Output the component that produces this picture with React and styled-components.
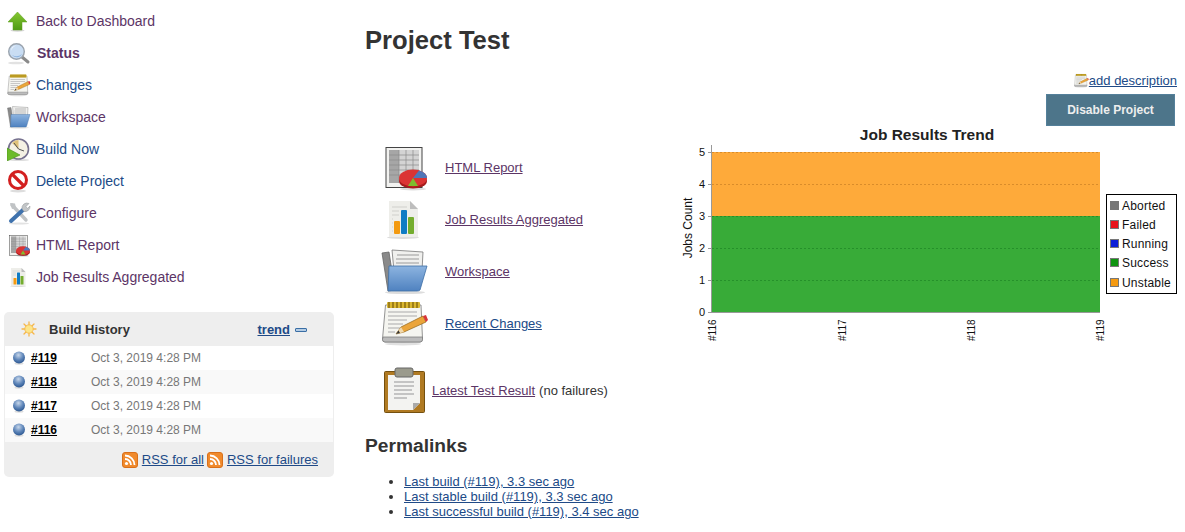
import React from "react";
import styled, { createGlobalStyle } from "styled-components";

const GlobalStyle = createGlobalStyle`
  html, body {
    margin: 0;
    padding: 0;
    background: #fff;
  }
  body {
    font-family: "Liberation Sans", Arial, sans-serif;
    font-size: 13px;
    color: #333;
  }
`;

const BLUE = "#204a87";
const PURPLE = "#5c3566";

const Page = styled.div`
  width: 1185px;
  height: 532px;
  overflow: hidden;
  display: flex;
`;

const Sidebar = styled.aside`
  width: 365px;
  flex: none;
  padding: 5px 0 0 4px;
  box-sizing: border-box;
`;

const Tasks = styled.nav`
  display: flex;
  flex-direction: column;
  margin-bottom: 19px;
`;

const Task = styled.a`
  height: 32px;
  display: flex;
  align-items: center;
  gap: ${(p) => (p.$active ? 6 : 5)}px;
  padding-left: 3px;
  color: ${(p) => (p.$visited ? PURPLE : BLUE)};
  font-size: 14px;
  font-weight: ${(p) => (p.$active ? "bold" : "normal")};
  text-decoration: none;
`;

const Panel = styled.section`
  width: 330px;
  background: #eee;
  border-radius: 5px;
  overflow: hidden;
`;

const PanelHead = styled.header`
  height: 34px;
  display: flex;
  align-items: center;
  padding: 0 27px 0 17px;
  font-size: 13px;
  font-weight: bold;
`;

const PanelTitle = styled.span`
  margin-left: 12px;
  flex: 1;
`;

const TrendLink = styled.a`
  color: ${BLUE};
  font-size: 13px;
  text-decoration: underline;
`;

const Minus = styled.span`
  width: 12px;
  height: 4px;
  margin-left: 5px;
  margin-top: 2px;
  border: 1px solid #3a6ea5;
  border-radius: 1px;
  background: #b4cce4;
  box-sizing: border-box;
`;

const BuildRow = styled.div`
  height: 24px;
  display: flex;
  align-items: center;
  margin: 0 1px;
  padding-left: 8px;
  background: ${(p) => (p.$odd ? "#f9f9f9" : "#fff")};
`;

const BuildLink = styled.a`
  width: 60px;
  margin-left: 6px;
  color: #000;
  font-size: 12px;
  font-weight: bold;
  text-decoration: underline;
`;

const BuildDate = styled.span`
  color: #777;
  font-size: 12px;
`;

const PanelFoot = styled.footer`
  height: 35px;
  display: flex;
  align-items: center;
  justify-content: flex-end;
  padding-right: 16px;
`;

const RssLink = styled.a`
  margin: 0 ${(p) => p.$gap ?? 0}px 0 4px;
  color: ${BLUE};
  text-decoration: underline;
`;

const Main = styled.main`
  flex: 1;
  min-width: 0;
  display: flex;
  flex-direction: column;
  padding-right: 8px;
`;

const Title = styled.h1`
  margin: 25px 0 0;
  font-size: 25.6px;
  line-height: 30px;
  font-weight: bold;
  color: #333;
`;

const Actions = styled.div`
  display: flex;
  flex-direction: column;
  align-items: flex-end;
  margin-top: 17px;
`;

const DescriptionLink = styled.a`
  display: flex;
  align-items: center;
  height: 16px;
  color: ${BLUE};
  text-decoration: underline;
`;

const DisableButton = styled.button`
  width: 129px;
  height: 32px;
  margin: 6px 2px 0 0;
  padding: 0;
  border: 1px solid #54809a;
  background: #4d758a;
  color: #eee;
  font-family: inherit;
  font-size: 12px;
  font-weight: bold;
`;

const Body = styled.div`
  display: flex;
`;

const Left = styled.div`
  width: 317px;
  flex: none;
  display: flex;
  flex-direction: column;
  padding-top: 15px;
`;

const BigRow = styled.div`
  height: 52px;
  display: flex;
  align-items: center;
  padding-left: 16px;
`;

const BigLink = styled.a`
  margin-left: 16px;
  color: ${(p) => (p.$visited ? PURPLE : BLUE)};
  text-decoration: underline;
`;

const ResultRow = styled.div`
  height: 52px;
  margin-top: 15px;
  display: flex;
  align-items: center;
  padding-left: 18px;
`;

const ResultLink = styled.a`
  margin-left: 1px;
  color: ${PURPLE};
  text-decoration: underline;
`;

const ResultNote = styled.span`
  margin-left: 4px;
`;

const ChartBox = styled.div`
  width: 495px;
  height: 220px;
  flex: none;
`;

const SubTitle = styled.h2`
  margin: 18px 0 0;
  font-size: 19.2px;
  line-height: 24px;
  font-weight: bold;
`;

const Permalinks = styled.ul`
  margin: 16px 0 0;
  padding-left: 39px;
  line-height: 15px;
`;

const Permalink = styled.a`
  color: ${BLUE};
  text-decoration: underline;
`;

const ArrowIcon = () => (
  <svg width="24" height="24" viewBox="0 0 24 24">
    <defs>
      <linearGradient id="arrowGreen" x1="0" y1="0" x2="0" y2="1">
        <stop offset="0" stopColor="#86c832" />
        <stop offset="1" stopColor="#4f9a14" />
      </linearGradient>
    </defs>
    <ellipse cx="10.5" cy="21.5" rx="7" ry="1.2" fill="#d5d5d5" />
    <path d="M10.5 3 L20 13 H15 V21 H6 V13 H1 Z" fill="url(#arrowGreen)" stroke="#5c9c1c" strokeWidth=".5" />
  </svg>
);

const SearchIcon = () => (
  <svg width="24" height="24" viewBox="0 0 24 24">
    <ellipse cx="9" cy="22" rx="8" ry="1.3" fill="#e2e2e2" />
    <path d="M15 16 L21 21" stroke="#8a8a8a" strokeWidth="3" strokeLinecap="round" />
    <circle cx="9.5" cy="10.5" r="7.8" fill="#c9ddf3" stroke="#9aa3ad" strokeWidth="1.4" />
    <path d="M4 10 A5.5 5.5 0 0 1 9.5 4.5 A8 8 0 0 0 4 10Z" fill="#fff" />
    <path d="M5 14 A6 6 0 0 0 15 13 A9 9 0 0 1 5 14Z" fill="#8fb5e0" />
  </svg>
);

const NotepadIcon = ({ size = 24 }) => (
  <svg width={size} height={size} viewBox="0 0 48 48">
    <ellipse cx="22" cy="45" rx="18" ry="1.4" fill="#e0e0e0" />
    <path d="M4.5 6 H40 L41.5 40 Q41.5 43 39 43 H4 Q1.5 43 1.5 40 Z" fill="#f5f5f0" stroke="#888" strokeWidth=".9" />
    <path d="M2 38 H41.5 V40.5 Q41.5 43 39 43 H4 Q1.5 43 1.5 40.5Z" fill="#bcbcbc" stroke="#777" strokeWidth=".7" />
    <rect x="6" y="3" width="33" height="6" rx="1" fill="#d9b62e" />
    <path d="M8 3v6M12 3v6M16 3v6M20 3v6M24 3v6M28 3v6M32 3v6M36 3v6" stroke="#8a6d12" strokeWidth="1.5" />
    <path d="M7 13H36M7 17H36M7 21H26M7 25H22M7 29H20M7 33H14" stroke="#aaa" strokeWidth="1.2" />
    <path d="M15 35 L20 28 L42 17 L45 23 L23 33 Z" fill="#eba53a" stroke="#8f6418" strokeWidth=".7" />
    <path d="M15 35 L20 28 L23 33Z" fill="#f0d9ae" />
    <path d="M15 35 L17.5 31.5 L19 34Z" fill="#333" />
    <path d="M42 17 L45 23 L47 21 L45 16Z" fill="#d8353a" />
  </svg>
);

const FolderIcon = ({ size = 24 }) => (
  <svg width={size} height={size} viewBox="0 0 48 48">
    <defs>
      <linearGradient id="folderBlue" x1="0" y1="0" x2="0" y2="1">
        <stop offset="0" stopColor="#8db4e0" />
        <stop offset="1" stopColor="#4f82c0" />
      </linearGradient>
    </defs>
    <ellipse cx="24" cy="45.5" rx="20" ry="1.6" fill="#ddd" />
    <path d="M1 6 L8 5 L14 43 L7 44 Z" fill="#8a8a8a" stroke="#666" strokeWidth=".8" />
    <path d="M11 3 L42 5 L41 24 L13 24 Z" fill="#f0f0ee" stroke="#777" strokeWidth=".8" />
    <path d="M16 8H38M15 12H38M15 16H38M14 20H38" stroke="#999" strokeWidth="1.2" />
    <path d="M8 19 L46 19 L39 43 Q38 44 36 44 H7 Z" fill="url(#folderBlue)" stroke="#3e6ea6" strokeWidth=".8" />
  </svg>
);

const ClockIcon = () => (
  <svg width="24" height="24" viewBox="0 0 24 24">
    <ellipse cx="12" cy="23" rx="10" ry="1" fill="#ddd" />
    <circle cx="11.5" cy="12" r="10" fill="#f4f1e4" stroke="#77728f" strokeWidth="1.6" />
    <path d="M11.5 12 L11.5 3 A9 9 0 0 0 5 6Z" fill="#e0c27a" />
    <path d="M11.5 12 L7 6M11.5 12 L17 14" stroke="#555" strokeWidth="1" />
    <path d="M0 11 L13 18 L0 24Z" fill="#6cbb2a" stroke="#4a8f1d" strokeWidth=".6" />
  </svg>
);

const NoIcon = () => (
  <svg width="24" height="24" viewBox="0 0 24 24">
    <ellipse cx="11" cy="22" rx="8" ry="1.4" fill="#ddd" />
    <circle cx="11" cy="11" r="8.5" fill="#fff" stroke="#d32020" strokeWidth="3" />
    <path d="M5 5 L17 17" stroke="#d32020" strokeWidth="3.2" />
  </svg>
);

const ToolsIcon = () => (
  <svg width="24" height="24" viewBox="0 0 24 24">
    <ellipse cx="12" cy="22.5" rx="10" ry="1" fill="#e2e2e2" />
    <path d="M5 4 L19 19" stroke="#c0c3c5" strokeWidth="3.4" strokeLinecap="round" />
    <path d="M3 2 L8 2.5 L9 7 L5 8 Z" fill="#c0c3c5" />
    <path d="M17 8 L4 20" stroke="#3f72ad" strokeWidth="4" strokeLinecap="round" />
    <path d="M15 8 A5 5 0 0 1 22 2.5 L19 5.5 L20.5 7.5 L23 5 A5 5 0 0 1 17 10.5Z" fill="#c3c6c8" stroke="#8f9294" strokeWidth=".5" />
  </svg>
);

const SheetIcon = ({ size = 24 }) => (
  <svg width={size} height={size} viewBox="0 0 48 48">
    <ellipse cx="32" cy="46" rx="13" ry="1.5" fill="#ddd" />
    <rect x="5" y="4.5" width="36" height="40" fill="#f2f2f0" stroke="#444" strokeWidth="1" />
    <rect x="8" y="7" width="30" height="33" fill="#d4d4d4" />
    <rect x="8" y="7" width="10" height="33" fill="#a6a6a6" />
    <path d="M8 12H38M8 17H38M8 22H38M8 27H38M8 32H38M18 7V40M25 7V40M32 7V40" stroke="#8a8a8a" strokeWidth=".7" />
    <ellipse cx="32" cy="38" rx="14" ry="7.5" fill="#a81c1c" />
    <ellipse cx="32" cy="35" rx="14" ry="8.5" fill="#db3434" />
    <path d="M32 35 L46 35 A14 8.5 0 0 0 38 27.5 Z" fill="#4f76b8" />
    <path d="M32 35 L27 43 L37 43 Z" fill="#7fbd2d" />
  </svg>
);

const ReportIcon = ({ size = 24 }) => (
  <svg width={size} height={size} viewBox="0 0 48 48">
    <ellipse cx="22" cy="42.5" rx="16" ry="1.5" fill="#ddd" />
    <path d="M8 6 H29 L37 14 V42 H8 Z" fill="#eeeeea" />
    <path d="M29 6 L37 14 H29 Z" fill="#bdbdbd" />
    <path d="M11 12H26M11 16H18M11 20H18M11 24H12M11 28H12M11 32H12M11 36H12" stroke="#cfcfcb" strokeWidth="1.2" />
    <rect x="13" y="26" width="6" height="13" rx="1" fill="#f39a10" />
    <rect x="20" y="15" width="6" height="24" rx="1" fill="#0f7cc4" />
    <rect x="27" y="22" width="6" height="17" rx="1" fill="#74ad2e" />
  </svg>
);

const ClipboardIcon = () => (
  <svg width="48" height="48" viewBox="0 0 48 48">
    <rect x="1.5" y="5.5" width="40" height="41" rx="1" fill="#b07a22" stroke="#74500f" strokeWidth="1" />
    <path d="M5 9 H37 V37 L30 44 H5 Z" fill="#f3f3f1" />
    <path d="M30 44 L37 37 H30 Z" fill="#aaa" />
    <rect x="12" y="2" width="18" height="9" rx="2" fill="#9a9a8c" stroke="#666" strokeWidth="1" />
    <path d="M11 16H31M11 20H31M11 24H29M11 28H31M11 32H24" stroke="#b5b5b5" strokeWidth="1.4" />
  </svg>
);

const SunIcon = () => (
  <svg width="16" height="16" viewBox="0 0 16 16">
    <g stroke="#f6b64a" strokeWidth="1.3" strokeLinecap="round">
      <path d="M8 1v2.5M8 12.5V15M1 8h2.5M12.5 8H15M3 3l1.8 1.8M11.2 11.2 13 13M13 3l-1.8 1.8M4.8 11.2 3 13" />
    </g>
    <circle cx="8" cy="8" r="4.2" fill="#fde58a" stroke="#f2b23c" strokeWidth=".8" />
  </svg>
);

const BallIcon = () => (
  <svg width="12" height="14" viewBox="0 0 12 14">
    <defs>
      <radialGradient id="ball" cx=".45" cy=".3" r=".75">
        <stop offset="0" stopColor="#c6d6ea" />
        <stop offset=".55" stopColor="#5c84b8" />
        <stop offset="1" stopColor="#25508a" />
      </radialGradient>
    </defs>
    <ellipse cx="6" cy="12.5" rx="4.5" ry="1.2" fill="#ddd" />
    <circle cx="6" cy="6.5" r="6" fill="url(#ball)" />
  </svg>
);

const RssIcon = () => (
  <svg width="16" height="16" viewBox="0 0 16 16">
    <rect x=".5" y=".5" width="15" height="15" rx="2.5" fill="#f08a2c" stroke="#d9701a" />
    <circle cx="4.5" cy="11.5" r="1.6" fill="#fff" />
    <path d="M3 7a6 6 0 0 1 6 6M3 3.5A9.5 9.5 0 0 1 12.5 13" fill="none" stroke="#fff" strokeWidth="1.8" />
  </svg>
);

const TaskIcons = {
  arrow: ArrowIcon,
  search: SearchIcon,
  notepad: NotepadIcon,
  folder: FolderIcon,
  clock: ClockIcon,
  no: NoIcon,
  tools: ToolsIcon,
  sheet: SheetIcon,
  report: ReportIcon,
};

const tasks = [
  { label: "Back to Dashboard", icon: "arrow", visited: true },
  { label: "Status", icon: "search", visited: true, active: true },
  { label: "Changes", icon: "notepad" },
  { label: "Workspace", icon: "folder", visited: true },
  { label: "Build Now", icon: "clock" },
  { label: "Delete Project", icon: "no" },
  { label: "Configure", icon: "tools", visited: true },
  { label: "HTML Report", icon: "sheet", visited: true },
  { label: "Job Results Aggregated", icon: "report", visited: true },
];

const builds = ["#119", "#118", "#117", "#116"];

const permalinks = [
  "Last build (#119), 3.3 sec ago",
  "Last stable build (#119), 3.3 sec ago",
  "Last successful build (#119), 3.4 sec ago",
];

const legend = [
  { label: "Aborted", color: "#777", y: 80 },
  { label: "Failed", color: "#e8141c", y: 99 },
  { label: "Running", color: "#0b1fd8", y: 118 },
  { label: "Success", color: "#0f9410", y: 137 },
  { label: "Unstable", color: "#f59a10", y: 157 },
];

const TrendChart = () => (
  <svg width="495" height="220" viewBox="0 0 495 220" fontFamily="'Liberation Sans', Arial, sans-serif">
    <text x="245" y="14" textAnchor="middle" fontSize="15.5" fontWeight="bold" fill="#222">
      Job Results Trend
    </text>
    <rect x="30" y="26" width="388" height="64" fill="#feaa3a" />
    <rect x="30" y="90" width="388" height="96" fill="#38ab38" />
    <g strokeDasharray="2 2" strokeWidth="1">
      <path d="M30 26.5H418M30 58.5H418" stroke="#d98c2a" />
      <path d="M30 90.5H418M30 122.5H418M30 154.5H418" stroke="#25902a" />
    </g>
    <path d="M29.5 19V186" stroke="#999" />
    <path d="M26 186.5H418" stroke="#999" strokeWidth="1" />
    <path d="M26 26.5h4M26 58.5h4M26 90.5h4M26 122.5h4M26 154.5h4" stroke="#999" />
    {[5, 4, 3, 2, 1, 0].map((v, i) => (
      <text key={v} x="23" y={30 + i * 32} textAnchor="end" fontSize="11" fill="#111">
        {v}
      </text>
    ))}
    <text transform="translate(10 102) rotate(-90)" textAnchor="middle" fontSize="12" fill="#111">
      Jobs Count
    </text>
    {[
      ["#116", 34],
      ["#117", 164],
      ["#118", 293],
      ["#119", 422],
    ].map(([label, x]) => (
      <text key={label} transform={`translate(${x} 215) rotate(-90)`} fontSize="10" fill="#111">
        {label}
      </text>
    ))}
    <rect x="424.5" y="68.5" width="70" height="99" fill="#fff" stroke="#000" />
    {legend.map((item) => (
      <g key={item.label}>
        <rect x="428.5" y={item.y - 4.5} width="8" height="8" fill={item.color} stroke="#777" />
        <text x="440" y={item.y + 4} fontSize="12" letterSpacing=".2" fill="#111">
          {item.label}
        </text>
      </g>
    ))}
  </svg>
);

const App = () => (
  <>
    <GlobalStyle />
    <Page>
      <Sidebar>
        <Tasks>
          {tasks.map((task) => {
            const Icon = TaskIcons[task.icon];
            return (
              <Task key={task.label} href="#" $visited={task.visited} $active={task.active}>
                <Icon />
                {task.label}
              </Task>
            );
          })}
        </Tasks>
        <Panel>
          <PanelHead>
            <SunIcon />
            <PanelTitle>Build History</PanelTitle>
            <TrendLink href="#">trend</TrendLink>
            <Minus />
          </PanelHead>
          {builds.map((build, i) => (
            <BuildRow key={build} $odd={i % 2 === 1}>
              <BallIcon />
              <BuildLink href="#">{build}</BuildLink>
              <BuildDate>Oct 3, 2019 4:28 PM</BuildDate>
            </BuildRow>
          ))}
          <PanelFoot>
            <RssIcon />
            <RssLink href="#" $gap={3}>RSS for all</RssLink>
            <RssIcon />
            <RssLink href="#">RSS for failures</RssLink>
          </PanelFoot>
        </Panel>
      </Sidebar>
      <Main>
        <Title>Project Test</Title>
        <Actions>
          <DescriptionLink href="#">
            <NotepadIcon size={15} />
            add description
          </DescriptionLink>
          <DisableButton>Disable Project</DisableButton>
        </Actions>
        <Body>
          <Left>
            <BigRow>
              <SheetIcon size={48} />
              <BigLink href="#" $visited>HTML Report</BigLink>
            </BigRow>
            <BigRow>
              <ReportIcon size={48} />
              <BigLink href="#" $visited>Job Results Aggregated</BigLink>
            </BigRow>
            <BigRow>
              <FolderIcon size={48} />
              <BigLink href="#" $visited>Workspace</BigLink>
            </BigRow>
            <BigRow>
              <NotepadIcon size={48} />
              <BigLink href="#">Recent Changes</BigLink>
            </BigRow>
            <ResultRow>
              <ClipboardIcon />
              <ResultLink href="#">Latest Test Result</ResultLink>
              <ResultNote>(no failures)</ResultNote>
            </ResultRow>
            <SubTitle>Permalinks</SubTitle>
            <Permalinks>
              {permalinks.map((link) => (
                <li key={link}>
                  <Permalink href="#">{link}</Permalink>
                </li>
              ))}
            </Permalinks>
          </Left>
          <ChartBox>
            <TrendChart />
          </ChartBox>
        </Body>
      </Main>
    </Page>
  </>
);

export default App;
